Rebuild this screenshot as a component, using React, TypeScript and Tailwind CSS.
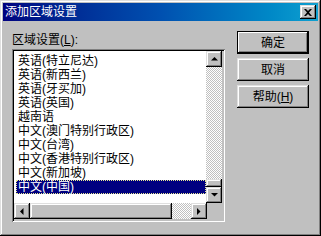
import React from "react";

const raised =
	"shadow-[inset_-1px_-1px_#000,inset_1px_1px_#dfdfdf,inset_-2px_-2px_#808080,inset_2px_2px_#fff]";
const checker =
	"bg-[repeating-conic-gradient(#c0c0c0_0_25%,#fff_0_50%)] bg-[length:2px_2px]";

const locales = [
	"英语(特立尼达)",
	"英语(新西兰)",
	"英语(牙买加)",
	"英语(英国)",
	"越南语",
	"中文(澳门特别行政区)",
	"中文(台湾)",
	"中文(香港特别行政区)",
	"中文(新加坡)",
	"中文(中国)",
];

const Arrow = ({ dir }: { dir: "up" | "down" | "left" | "right" }) => {
	const pts = {
		up: "3.5,0 0,3.5 7,3.5",
		down: "0,0 7,0 3.5,3.5",
		left: "3.5,0 3.5,7 0,3.5",
		right: "0,0 0,7 3.5,3.5",
	}[dir];
	const vertical = dir === "up" || dir === "down";
	return (
		<svg width={vertical ? 7 : 4} height={vertical ? 4 : 7} viewBox={vertical ? "0 0 7 4" : "0 0 4 7"}>
			<polygon points={pts} fill="#000" />
		</svg>
	);
};

const ScrollBtn = ({ dir }: { dir: "up" | "down" | "left" | "right" }) => (
	<div className={`w-[16px] h-[16px] shrink-0 bg-[#c0c0c0] flex items-center justify-center ${raised}`}>
		<Arrow dir={dir} />
	</div>
);

const Button = ({ children, isDefault }: { children: React.ReactNode; isDefault?: boolean }) => (
	<div
		className={`w-[72px] h-[23px] bg-[#c0c0c0] flex items-center justify-center text-[12px] leading-[12px] text-black ${
			isDefault
				? "shadow-[inset_0_0_0_1px_#000,inset_-2px_-2px_#000,inset_2px_2px_#fff,inset_-3px_-3px_#808080]"
				: raised
		}`}
	>
		{children}
	</div>
);

export default function App() {
	return (
		<div className="w-[321px] h-[236px] bg-[#c0c0c0] p-[3px] font-['Liberation_Sans','Noto_Sans_CJK_SC',sans-serif] shadow-[inset_-1px_-1px_#000,inset_1px_1px_#dfdfdf,inset_-2px_-2px_#808080,inset_2px_2px_#fff]">
			{/* title bar */}
			<div className="h-[18px] bg-linear-to-r from-[#000080] via-[#0050b0] to-[#10a0d0] flex items-center justify-between pl-[2px] pr-[2px]">
				<span className="text-white text-[12px] leading-[12px]">添加区域设置</span>
				<div className={`w-[16px] h-[14px] bg-[#c0c0c0] flex items-center justify-center ${raised}`}>
					<svg width="8" height="7" viewBox="0 0 8 7">
						<path d="M0 0h2l2 2 2-2h2L5 3.5 8 7H6L4 5 2 7H0l3-3.5z" fill="#000" />
					</svg>
				</div>
			</div>

			{/* body */}
			<div className="flex pl-[9px] pt-[10px] gap-[12px]">
				<div className="flex flex-col pt-[3px]">
					<div className="text-[12px] leading-[12px] text-black">
						区域设置(<span className="underline">L</span>):
					</div>
					<div className="mt-[3px] w-[213px] h-[173px] p-[2px] shadow-[inset_1px_1px_#808080,inset_-1px_-1px_#fff,inset_2px_2px_#000,inset_-2px_-2px_#c0c0c0] flex flex-col">
						<div className="flex h-[152px]">
							<div className="w-[192px] bg-white pt-[3px] pl-[2px]">
								{locales.map((name, i) => {
									const selected = i === locales.length - 1;
									return (
										<div
											key={name}
											className={`h-[14px] w-[190px] px-[1px] flex items-center text-[12px] leading-[12px] whitespace-nowrap border border-dotted ${
												selected ? "bg-[#000080] text-white border-[#e8e890]" : "text-black border-transparent"
											}`}
										>
											{name}
										</div>
									);
								})}
							</div>
							<div className="w-[16px] flex flex-col">
								<ScrollBtn dir="up" />
								<div className={`flex-1 ${checker}`} />
								<div className={`h-[8px] bg-[#c0c0c0] ${raised}`} />
								<ScrollBtn dir="down" />
							</div>
						</div>
						<div className="flex h-[16px]">
							<ScrollBtn dir="left" />
							<div className={`w-[142px] bg-[#c0c0c0] ${raised}`} />
							<div className={`flex-1 ${checker}`} />
							<ScrollBtn dir="right" />
							<div className="w-[16px] bg-[#c0c0c0]" />
						</div>
					</div>
				</div>

				<div className="flex flex-col gap-[4px]">
					<Button isDefault>确定</Button>
					<Button>取消</Button>
					<Button>
						帮助(<span className="underline">H</span>)
					</Button>
				</div>
			</div>
		</div>
	);
}
